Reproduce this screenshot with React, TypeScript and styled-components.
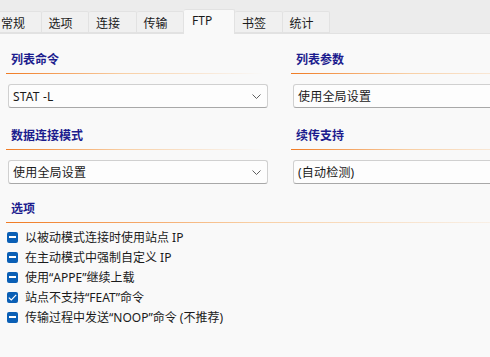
import styled, { createGlobalStyle } from "styled-components";

const GlobalStyle = createGlobalStyle`
  html, body {
    margin: 0;
    padding: 0;
    background: #f9f9f9;
    overflow: hidden;
  }
  * {
    box-sizing: border-box;
  }
`;

const tabs = ["常规", "选项", "连接", "传输", "FTP", "书签", "统计"];

const options = [
  { label: "以被动模式连接时使用站点 IP", checked: false },
  { label: "在主动模式中强制自定义 IP", checked: false },
  { label: "使用“APPE”继续上载", checked: false },
  { label: "站点不支持“FEAT”命令", checked: true },
  { label: "传输过程中发送“NOOP”命令 (不推荐)", checked: false },
];

function Chevron() {
  return (
    <svg width="9" height="5" viewBox="0 0 9 5">
      <path d="M0.5 0.5 L4.5 4.5 L8.5 0.5" fill="none" stroke="#5f5f5f" strokeWidth="1" />
    </svg>
  );
}

function Select({ value, arrow }: { value: string; arrow?: boolean }) {
  return (
    <SelectBox>
      <span>{value}</span>
      {arrow && <Chevron />}
    </SelectBox>
  );
}

export default function App() {
  return (
    <Page>
      <GlobalStyle />
      <Inner>
        <TabStrip>
          {tabs.map((t) => (
            <Tab key={t} $active={t === "FTP"}>
              {t}
            </Tab>
          ))}
        </TabStrip>
        <Content>
          <Grid>
            <Column>
              <Heading>列表命令</Heading>
              <Select value="STAT -L" arrow />
            </Column>
            <Column>
              <Heading>列表参数</Heading>
              <Select value="使用全局设置" />
            </Column>
            <Column $top={20}>
              <Heading>数据连接模式</Heading>
              <Select value="使用全局设置" arrow />
            </Column>
            <Column $top={20}>
              <Heading>续传支持</Heading>
              <Select value="(自动检测)" />
            </Column>
          </Grid>
          <OptionsBlock>
            <Heading $wide>选项</Heading>
            <OptionList>
              {options.map((o) => (
                <OptionRow key={o.label}>
                  <Box>
                    {o.checked ? (
                      <svg width="9" height="7" viewBox="0 0 9 7">
                        <path d="M0.8 3.6 L3.3 6 L8.2 0.9" fill="none" stroke="#fff" strokeWidth="1.2" />
                      </svg>
                    ) : (
                      <Dash />
                    )}
                  </Box>
                  <span>{o.label}</span>
                </OptionRow>
              ))}
            </OptionList>
          </OptionsBlock>
        </Content>
      </Inner>
    </Page>
  );
}

const Page = styled.div`
  width: 490px;
  height: 357px;
  overflow: hidden;
  font-family: "Noto Sans", "Noto Sans CJK SC", sans-serif;
  font-size: 12px;
  color: #1b1b1b;
`;

const Inner = styled.div`
  width: 560px;
`;

const TabStrip = styled.div`
  display: flex;
  align-items: flex-end;
  height: 34px;
  margin-left: -6px;
  background: #ececec;
  border-bottom: 1px solid #e2e2e2;
`;

const Tab = styled.div<{ $active?: boolean }>`
  width: ${(p) => (p.$active ? "51px" : "47.5px")};
  height: ${(p) => (p.$active ? "25px" : "22px")};
  margin-bottom: ${(p) => (p.$active ? "-1px" : "0")};
  padding: ${(p) => (p.$active ? "3px 0 0 8px" : "4px 0 0 7px")};
  line-height: 16px;
  background: ${(p) => (p.$active ? "#f9f9f9" : "#f0f0f0")};
  border: 1px solid #e2e2e2;
  border-bottom: ${(p) => (p.$active ? "none" : "1px solid #e2e2e2")};
  border-left: none;
  border-top-left-radius: 2px;
  border-top-right-radius: 2px;
  color: #1a1a1a;
`;

const Content = styled.div`
  padding: 18px 0 0 6px;
`;

const Grid = styled.div`
  display: grid;
  grid-template-columns: 262px 262px;
  column-gap: 23px;
`;

const Column = styled.div<{ $top?: number }>`
  display: flex;
  flex-direction: column;
  margin-top: ${(p) => p.$top ?? 0}px;
`;

const Heading = styled.div<{ $wide?: boolean }>`
  padding: 0 0 5px 5px;
  line-height: 16px;
  font-weight: bold;
  color: #1c1c8e;
  border-bottom: 1px solid transparent;
  border-image: linear-gradient(
      to right,
      #f07a22,
      rgba(248, 190, 130, 0.7) 45%,
      rgba(255, 255, 255, 0) ${(p) => (p.$wide ? "100%" : "98%")}
    )
    1;
`;

const SelectBox = styled.div`
  display: flex;
  align-items: center;
  justify-content: space-between;
  height: 24px;
  margin: 10px 0 0 2px;
  padding: 0 6px 0 4px;
  background: #fdfdfd;
  border: 1px solid #d0d0d0;
  border-bottom-color: #a8a8a8;
  border-radius: 3px;
  color: #1a1a1a;
  letter-spacing: 0.2px;
`;

const OptionsBlock = styled.div`
  margin-top: 17px;
`;

const OptionList = styled.div`
  display: flex;
  flex-direction: column;
  padding-top: 4px;
`;

const OptionRow = styled.div`
  display: flex;
  align-items: center;
  gap: 7px;
  height: 20px;
  padding-left: 1px;
`;

const Box = styled.div`
  display: flex;
  align-items: center;
  justify-content: center;
  width: 11px;
  height: 11px;
  border-radius: 2px;
  background: #0a5fb5;
`;

const Dash = styled.div`
  width: 7px;
  height: 1.5px;
  background: #fff;
`;
